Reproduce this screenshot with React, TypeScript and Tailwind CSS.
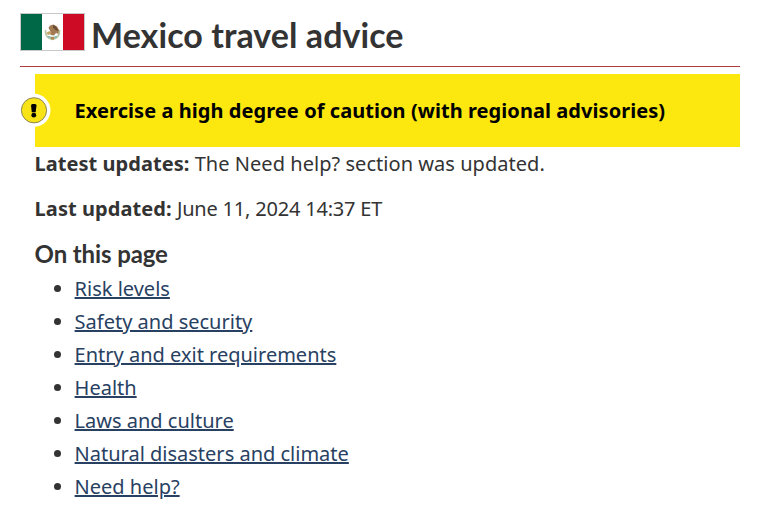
const SECTIONS = [
  'Risk levels',
  'Safety and security',
  'Entry and exit requirements',
  'Health',
  'Laws and culture',
  'Natural disasters and climate',
  'Need help?',
]

function Flag() {
  return (
    <svg width="65" height="38" viewBox="0 0 65 38" className="shrink-0">
      <rect width="65" height="38" fill="#c8c8c8" />
      <rect x="1" y="1" width="21" height="36" fill="#006847" />
      <rect x="22" y="1" width="21" height="36" fill="#fff" />
      <rect x="43" y="1" width="21" height="36" fill="#ce0b24" />
      {/* wreath */}
      <path d="M25.5 17c-.5 5 2.5 9 7 9.3c4.500-.3 7.500-4.300 7-9.300" fill="none" stroke="#b9c6a6" strokeWidth="1.7" />
      <path d="M28 23.5q4.500 2.500 9 0" fill="none" stroke="#8fb9ae" strokeWidth="2" />
      {/* eagle */}
      <path d="M28.500 15l1.500-2.500 3.500-1 3.500 2 2 3.500-.5 4-2.500-1-2 2.500-3-.5-2-2 1.500-1.500z" fill="#a37b52" />
      <path d="M33 12l3 1.500 2.500 4-2.500 0-3-3z" fill="#6b4d35" />
      <path d="M26 20l3.500-2 2 2.500-3 1.500z" fill="#c5a468" />
      <path d="M31 24h3v2.500h-3z" fill="#b08b4d" />
    </svg>
  )
}

function Warning() {
  return (
    <svg width="32" height="34" viewBox="0 0 32 34" className="absolute -left-4 top-[19px]">
      <circle cx="15" cy="17.3" r="16.5" fill="#fff" />
      <circle cx="15" cy="17.3" r="12.6" fill="#f8e416" stroke="#8b8656" strokeWidth="1" />
      <path d="M12 12.500q0-1.500 1.500-1.500h2.500q1.500 0 1.500 1.500l-.8 6.800h-3.900z" fill="#000" />
      <circle cx="14.800" cy="22.2" r="2.400" fill="#000" />
    </svg>
  )
}

export default function App() {
  return (
    <main className="h-[517px] bg-white pl-5 pr-[26px] pt-[13px] font-['Noto_Sans','Liberation_Sans',sans-serif] text-[20px] leading-[33px] text-[#333]">
      <h1 className="flex h-[54px] items-start gap-1.5 border-b border-[#af3c43] font-['Lato',sans-serif] text-[34px] font-bold leading-[43px] tracking-[0.06px]">
        <Flag />
        Mexico travel advice
      </h1>

      <div className="ml-[14.6px]">
        <div className="relative mt-[7px] flex h-[73px] items-center bg-[#fce80f] pl-10 font-bold tracking-[0.06px] text-black">
          <Warning />
          Exercise a high degree of caution (with regional advisories)
        </div>
        <p className="tracking-[0.04px]"><b>Latest updates:</b> The Need help? section was updated.</p>
        <p className="mt-3">
          <b className="tracking-[0.07px]">Last updated:</b>{' '}
          <span className="tracking-[-0.2px]">June 11, 2024 14:37 ET</span>
        </p>
        <h2 className="mt-3 mb-px font-['Lato',sans-serif] text-[24px] font-bold leading-[34px] tracking-[-0.12px]">On this page</h2>
        <ul className="list-disc pl-10">
          {SECTIONS.map((s) => (
            <li key={s}>
              <a href="#" className="text-[#284162] underline">{s}</a>
            </li>
          ))}
        </ul>
      </div>
    </main>
  )
}
